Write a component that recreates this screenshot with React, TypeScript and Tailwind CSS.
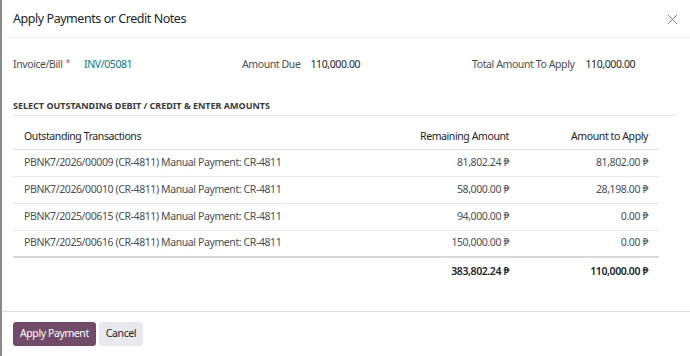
import React from 'react';
import { X } from 'lucide-react';

type Line = {
  name: string;
  remaining: string;
  apply: string;
};

const lines: Line[] = [
  { name: 'PBNK7/2026/00009 (CR-4811) Manual Payment: CR-4811', remaining: '81,802.24 ₱', apply: '81,802.00 ₱' },
  { name: 'PBNK7/2026/00010 (CR-4811) Manual Payment: CR-4811', remaining: '58,000.00 ₱', apply: '28,198.00 ₱' },
  { name: 'PBNK7/2025/00615 (CR-4811) Manual Payment: CR-4811', remaining: '94,000.00 ₱', apply: '0.00 ₱' },
  { name: 'PBNK7/2025/00616 (CR-4811) Manual Payment: CR-4811', remaining: '150,000.00 ₱', apply: '0.00 ₱' },
];

export default function App() {
  return (
    <div
      className="w-[690px] h-[356px] bg-white border-l-2 border-[#8a8a8a] flex flex-col text-[10.5px] tracking-[-0.4px] text-[#4a4f55]"
      style={{ fontFamily: '"Noto Sans", sans-serif' }}
    >
      {/* header */}
      <div className="h-[38px] flex items-center justify-between pl-[11px] pr-[9px] pt-[2px] border-b border-[#eef0f2]">
        <h1 className="text-[12.5px] tracking-[-0.45px] text-[#212529]">Apply Payments or Credit Notes</h1>
        <X size={17} strokeWidth={1.2} className="text-[#6c6f73]" />
      </div>

      {/* fields */}
      <div className="h-[50px] flex items-center pl-[11px] pt-[3px]">
        <div className="flex items-center w-[229px]">
          <span>Invoice/Bill</span>
          <span className="text-[#d44c59] ml-[3px] text-[9px] -mt-[3px]">*</span>
          <span className="ml-[14px] text-[#017e84]">INV/05081</span>
        </div>
        <div className="flex items-center w-[230px]">
          <span>Amount Due</span>
          <span className="ml-[10px] text-[#212529]">110,000.00</span>
        </div>
        <div className="flex items-center">
          <span>Total Amount To Apply</span>
          <span className="ml-[11px] text-[#212529]">110,000.00</span>
        </div>
      </div>

      {/* section heading */}
      <div className="mx-[11px] mt-[9px] pt-[1px] pb-[1px] border-b border-[#e4e6e8] w-[664px]">
        <span className="text-[9px] font-bold tracking-[0px] text-[#373a3e]">SELECT OUTSTANDING DEBIT / CREDIT &amp; ENTER AMOUNTS</span>
      </div>

      {/* table */}
      <div className="mx-[11px] mt-[6px] w-[646px]">
        <div className="h-[28px] pt-[4px] flex items-center border-b border-[#dee2e6] text-[#212529]">
          <div className="flex-1 pl-[11px]">Outstanding Transactions</div>
          <div className="w-[150px] text-right">Remaining Amount</div>
          <div className="w-[150px] text-right pr-[11px]">Amount to Apply</div>
        </div>
        {lines.map((l, i) => (
          <div
            key={l.name}
            className={`h-[27px] flex items-center ${i === lines.length - 1 ? 'border-b-2 border-[#d6d8db]' : 'border-b border-[#e6e8ea]'}`}
          >
            <div className="flex-1 pl-[11px]">{l.name}</div>
            <div className="w-[150px] text-right">{l.remaining}</div>
            <div className="w-[150px] text-right pr-[11px]">{l.apply}</div>
          </div>
        ))}
        <div className="h-[29px] flex items-center font-semibold text-[#212529]">
          <div className="flex-1" />
          <div className="w-[150px] text-right">383,802.24 ₱</div>
          <div className="w-[150px] text-right pr-[11px]">110,000.00 ₱</div>
        </div>
      </div>

      {/* footer */}
      <div className="mt-auto h-[45px] border-t border-[#dcdfe2] flex items-center gap-[3px] pl-[11px]">
        <button className="h-[24px] px-[7px] rounded-[3px] bg-[#714b67] text-white">Apply Payment</button>
        <button className="h-[24px] px-[7px] rounded-[3px] bg-[#e7e9ed] text-[#212529]">Cancel</button>
      </div>
    </div>
  );
}
